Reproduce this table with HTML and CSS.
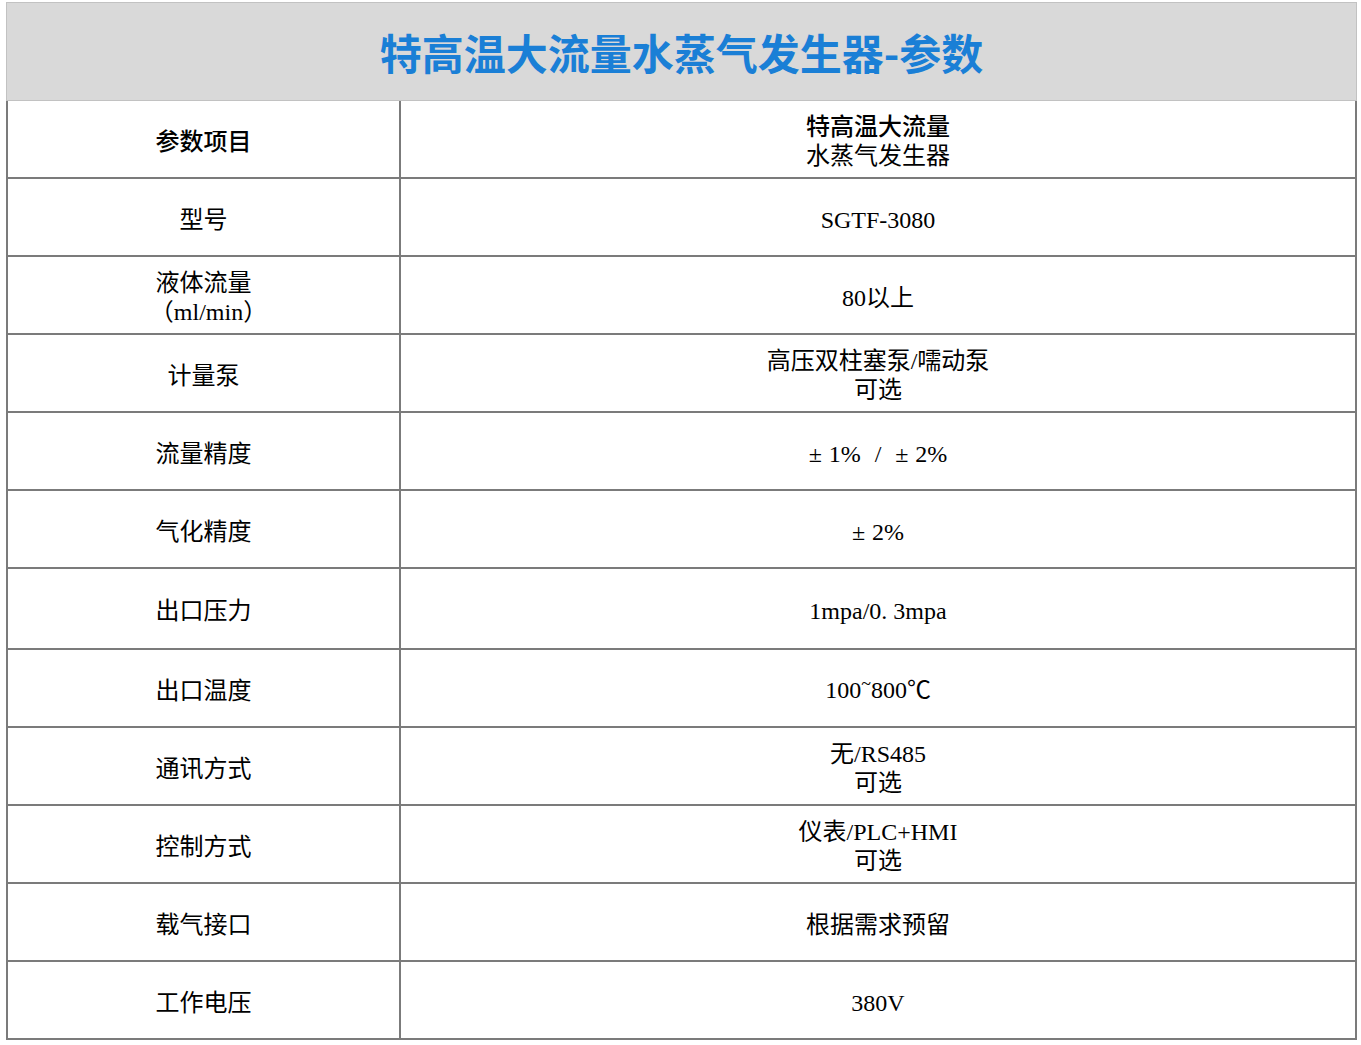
FILE: index.html
```html
<!DOCTYPE html>
<html lang="zh-CN">
<head>
<meta charset="utf-8">
<title>特高温大流量水蒸气发生器-参数</title>
<link rel="stylesheet" href="styles.css">
</head>
<body>
<div class="sheet">
  <div class="banner"><h1 class="title">特高温大流量水蒸气发生器-参数</h1></div>
  <table class="params">
    <colgroup><col class="c1"><col class="c2"></colgroup>
    <tbody>
      <tr><td class="b">参数项目</td><td><span class="b">特高温大流量</span><br>水蒸气发生器</td></tr>
      <tr><td>型号</td><td>SGTF-3080</td></tr>
      <tr><td>液体流量<br><span class="unit">（ml/min）</span></td><td>80以上</td></tr>
      <tr><td>计量泵</td><td>高压双柱塞泵/嚅动泵<br>可选</td></tr>
      <tr><td>流量精度</td><td><span class="pm">±</span>1% <span class="sl">/</span> <span class="pm">±</span>2%</td></tr>
      <tr><td>气化精度</td><td><span class="pm">±</span>2%</td></tr>
      <tr class="tall"><td>出口压力</td><td>1mpa/0.&nbsp;3mpa</td></tr>
      <tr><td>出口温度</td><td>100<span class="tl">~</span>800℃</td></tr>
      <tr><td>通讯方式</td><td>无/RS485<br>可选</td></tr>
      <tr><td>控制方式</td><td>仪表/PLC+HMI<br>可选</td></tr>
      <tr><td>载气接口</td><td>根据需求预留</td></tr>
      <tr><td>工作电压</td><td>380V</td></tr>
    </tbody>
  </table>
</div>
</body>
</html>
```
FILE: styles.css
```css
html, body {
  margin: 0;
  padding: 0;
  background: #ffffff;
}
.sheet {
  margin: 2px 0 0 6px;
  width: 1351px;
}
.banner {
  box-sizing: border-box;
  height: 99px;
  background: #d9d9d9;
  border: 1px solid #c2c2c2;
  display: flex;
  align-items: center;
  justify-content: center;
}
.title {
  margin: 0;
  font-family: "Noto Sans CJK SC", "Liberation Sans", sans-serif;
  font-weight: 700;
  font-size: 42px;
  line-height: 1;
  color: #1a7fd6;
  letter-spacing: 0;
}
.params {
  width: 1351px;
  border-collapse: collapse;
  table-layout: fixed;
  font-family: "Liberation Serif", "Noto Sans CJK SC", serif;
  font-size: 24px;
  line-height: 29px;
  color: #000;
}
.c1 { width: 393px; }
.params td {
  border: 2px solid #7b7b7b;
  border-top-width: 1px;
  height: 70px;
  padding: 6px 0 0;
  text-align: center;
  vertical-align: middle;
}
.params tr:first-child td { border-top: 0; }
.params tr.tall td { height: 73px; }
.b { font-weight: 500; }
.unit { padding-left: 10px; }
.pm {
  display: inline-block;
  width: 20px;
  text-align: left;
}
.sl { margin: 0 8px; }
.tl {
  display: inline-block;
  transform: translateY(-8px);
  font-size: 18px;
}
```
